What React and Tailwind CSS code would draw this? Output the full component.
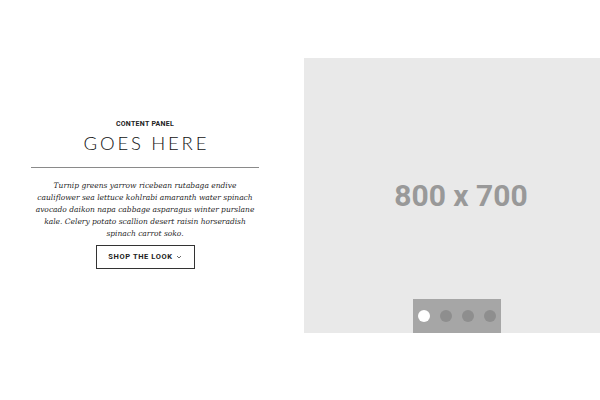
import React from "react";

const dots = [true, false, false, false];

export default function App() {
  return (
    <div className="w-[600px] h-[400px] bg-white pt-[58px] overflow-hidden">
      <div className="flex items-start">
        {/* content panel */}
        <div className="w-[290px] shrink-0 mt-[63px] px-[31px] flex flex-col items-center">
          <div
            className="text-[7px] font-bold tracking-[0.04em] text-[#222] leading-none"
            style={{ fontFamily: "Roboto, sans-serif" }}
          >
            CONTENT PANEL
          </div>
          <h1
            className="mt-[6px] text-[18.5px] font-light tracking-[0.15em] pl-[0.15em] text-[#111] leading-none"
            style={{ fontFamily: "Lato, sans-serif" }}
          >
            GOES HERE
          </h1>
          <div className="w-full mt-[14px] h-px bg-[#8a8a8a]" />
          <p
            className="mt-[12px] max-w-[222px] text-center italic text-[7.5px] leading-[12px] text-[#1f1f1f]"
            style={{ fontFamily: "'DejaVu Serif', serif" }}
          >
            Turnip greens yarrow ricebean rutabaga endive cauliflower sea lettuce
            kohlrabi amaranth water spinach avocado daikon napa cabbage asparagus
            winter purslane kale. Celery potato scallion desert raisin horseradish
            spinach carrot soko.
          </p>
          <button
            className="mt-[5px] w-[99px] h-[24px] border border-[#333] flex items-center justify-center gap-[3px] text-[7.5px] font-bold tracking-[0.08em] text-[#222]"
            style={{ fontFamily: "Roboto, sans-serif" }}
          >
            SHOP THE LOOK
            <svg width="6" height="4" viewBox="0 0 6 4" fill="none">
              <path d="M1 1l2 2 2-2" stroke="#444" strokeWidth="0.8" />
            </svg>
          </button>
        </div>

        {/* image slider */}
        <div className="relative ml-[14px] w-[314px] shrink-0 h-[275px] bg-[#e9e9e9] flex items-center justify-center">
          <span
            className="text-[30px] font-bold text-[#999] leading-none"
            style={{ fontFamily: "Roboto, sans-serif" }}
          >
            800 x 700
          </span>
          <div className="absolute left-[109px] bottom-0 w-[88px] h-[34px] bg-[#a6a6a6] flex items-center justify-center gap-[10px]">
            {dots.map((active, i) => (
              <span
                key={i}
                className={
                  active
                    ? "w-[12px] h-[12px] rounded-full bg-white"
                    : "w-[12px] h-[12px] rounded-full bg-[#8e8e8e]"
                }
              />
            ))}
          </div>
        </div>
      </div>
    </div>
  );
}
